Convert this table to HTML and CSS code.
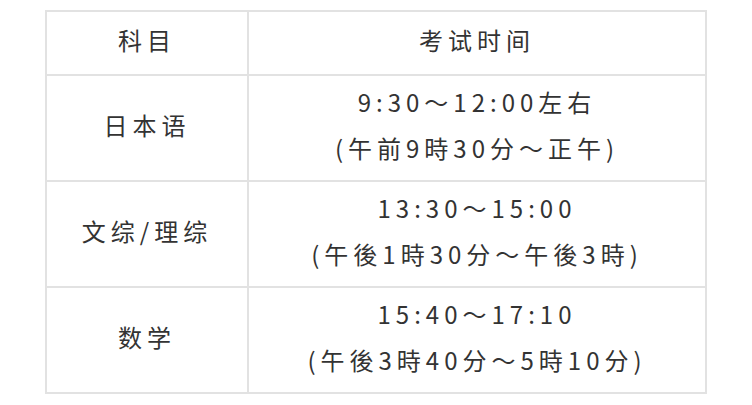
FILE: index.html
```html
<!DOCTYPE html>
<html lang="zh">
<head>
<meta charset="utf-8">
<link rel="stylesheet" href="styles.css">
</head>
<body>
<table class="exam">
  <tr class="head">
    <td class="subj">科目</td>
    <td class="time">考试时间</td>
  </tr>
  <tr class="row">
    <td class="subj">日本语</td>
    <td class="time">9:30～12:00左右<br>(午前9時30分～正午)</td>
  </tr>
  <tr class="row">
    <td class="subj">文综/理综</td>
    <td class="time">13:30～15:00<br>(午後1時30分～午後3時)</td>
  </tr>
  <tr class="row">
    <td class="subj">数学</td>
    <td class="time">15:40～17:10<br>(午後3時40分～5時10分)</td>
  </tr>
</table>
</body>
</html>
```
FILE: styles.css
```css
html, body {
  margin: 0;
  padding: 0;
  background: #fff;
}
body {
  padding: 10px 0 0 45px;
  font-family: "Noto Sans CJK SC", "Noto Sans", sans-serif;
  color: #333;
}
.exam {
  border-collapse: collapse;
  width: 662px;
  font-size: 24px;
  letter-spacing: 5px;
  line-height: 46px;
}
.exam td {
  border: 2px solid #e2e2e2;
  text-align: center;
  vertical-align: middle;
  padding: 0 0 6px;
}
.exam .subj {
  width: 200px;
}
.head td {
  height: 56px;
}
.row td {
  height: 98px;
}
```
